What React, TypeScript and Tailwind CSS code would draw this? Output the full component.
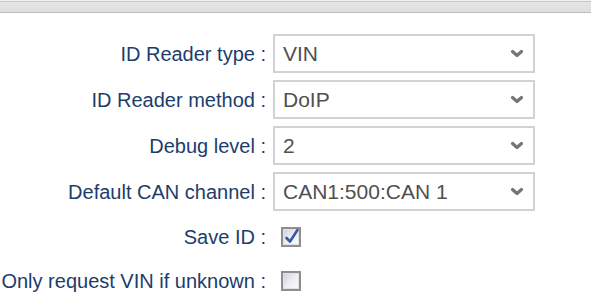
const rows = [
  { label: "ID Reader type :", value: "VIN" },
  { label: "ID Reader method :", value: "DoIP" },
  { label: "Debug level :", value: "2" },
  { label: "Default CAN channel :", value: "CAN1:500:CAN 1" },
];

function Chevron() {
  return (
    <svg width="14" height="9" viewBox="0 0 14 9" className="shrink-0">
      <path d="M2.5 2.5 L7 6.5 L11.5 2.5" fill="none" stroke="#757575" strokeWidth="3.2" strokeLinecap="round" strokeLinejoin="round" />
    </svg>
  );
}

function SelectBox({ value }: { value: string }) {
  return (
    <div className="flex h-[39px] w-[262px] items-center justify-between border-2 border-[#d2d2d2] bg-white pl-[8px] pr-[9px]">
      <span className="text-[21px] leading-none text-[#505050]">{value}</span>
      <Chevron />
    </div>
  );
}

function Checkbox({ checked }: { checked: boolean }) {
  return (
    <div className="ml-[8px] flex h-[20px] w-[20px] items-center justify-center border-2 border-[#8e8e8e] bg-[#e2e2e2] p-[1px]">
      <div className="relative flex h-full w-full items-center justify-center bg-gradient-to-br from-[#cfd3dc] via-[#eceef2] to-[#fafafa]">
        {checked && (
          <svg width="16" height="16" viewBox="0 0 16 16" className="absolute -top-[2px] left-[0px]">
            <path d="M2.5 10 L6 13.5 L13.5 2" fill="none" stroke="#3856a8" strokeWidth="2.6" strokeLinecap="round" strokeLinejoin="round" />
          </svg>
        )}
      </div>
    </div>
  );
}

export default function App() {
  return (
    <div className="h-[303px] w-[591px] overflow-hidden bg-white" style={{ fontFamily: '"Liberation Sans", Arial, sans-serif' }}>
      <div className="h-[1px] bg-[#f2f2f2]" />
      <div className="h-[12px] border-y border-t-[#c4c4c4] border-b-[#bdbdbd] bg-gradient-to-b from-[#e6e6e6] to-[#dedede]" />
      <div className="mt-[21px] grid grid-cols-[266px_262px] gap-x-[7px] gap-y-[7px]">
        {rows.map((r) => (
          <div key={r.label} className="contents">
            <div className="flex h-[39px] items-center justify-end whitespace-nowrap text-[20px] text-[#1c3d6c]">
              {r.label}
            </div>
            <SelectBox value={r.value} />
          </div>
        ))}
        <div className="flex h-[37px] items-center justify-end whitespace-nowrap text-[20px] text-[#1c3d6c]">
          Save ID :
        </div>
        <div className="flex h-[37px] items-center">
          <Checkbox checked />
        </div>
        <div className="flex h-[37px] items-center justify-end whitespace-nowrap text-[20px] text-[#1c3d6c]">
          Only request VIN if unknown :
        </div>
        <div className="flex h-[37px] items-center">
          <Checkbox checked={false} />
        </div>
      </div>
    </div>
  );
}
